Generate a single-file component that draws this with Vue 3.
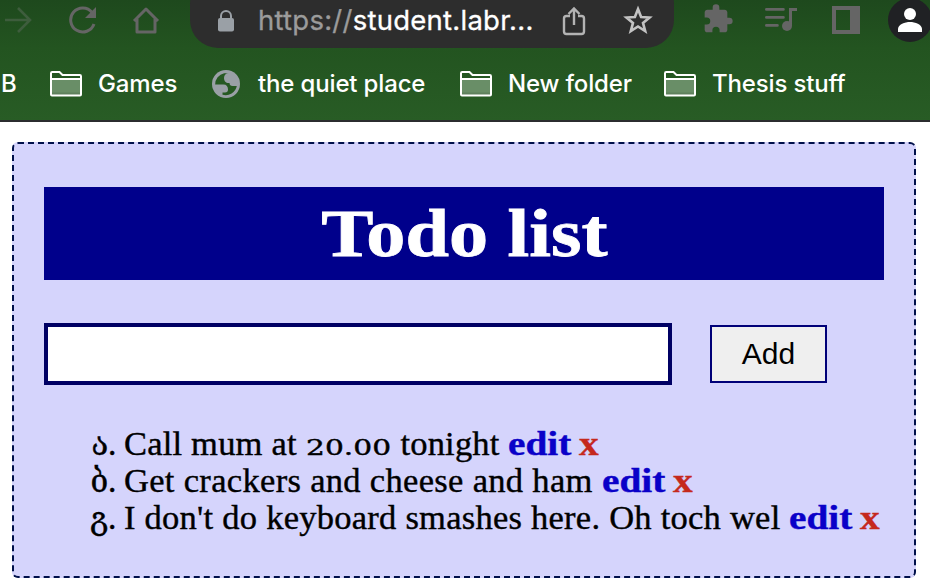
<script setup>
import { ref } from 'vue'

const draft = ref('')
const bookmarks = [
  { label: 'Games', icon: 'folder', kind: 'games' },
  { label: 'the quiet place', icon: 'globe', kind: 'quiet' },
  { label: 'New folder', icon: 'folder', kind: 'new' },
  { label: 'Thesis stuff', icon: 'folder', kind: 'thesis' },
]
const todos = [
  { marker: 'ა', parts: [{ text: 'Call mum at ' }, { text: '20.00', num: true }, { text: ' tonight' }], cls: 'call' },
  { marker: 'ბ', parts: [{ text: 'Get crackers and cheese and ham' }], cls: 'get' },
  { marker: 'გ', parts: [{ text: "I don't do keyboard smashes here. Oh toch wel" }], cls: 'keys' },
]
</script>

<template>
  <div class="page">
    <header class="browser">
      <div class="toolbar">
        <svg class="forward" width="28" height="28" viewBox="0 0 28 28" fill="none" stroke="#3e5d3d" stroke-width="2.6"><path d="M1 14h25M14 2l12 12-12 12" /></svg>
        <svg class="reload" width="28" height="28" viewBox="0 0 28 28"><path d="M23.1 6.5A12 12 0 1 0 25 18" fill="none" stroke="#656565" stroke-width="3" /><path d="M27 1v11H16z" fill="#656565" /></svg>
        <svg class="home" width="28" height="28" viewBox="0 0 28 28" fill="none" stroke="#656565" stroke-width="3" stroke-linejoin="round"><path d="M2 15 14 3l12 12M5 13v13h18V13" /></svg>
        <div class="address">
          <svg class="lock" width="18" height="22" viewBox="0 0 18 22"><path d="M4 9V6a5 5 0 0 1 10 0v3" fill="none" stroke="#9aa0a6" stroke-width="2" /><rect x="1" y="8" width="16" height="13.5" rx="2" fill="#9aa0a6" /></svg>
          <span class="url"><span class="scheme">https://</span>student.labr...</span>
          <svg class="share" width="24" height="30" viewBox="0 0 24 30" fill="none" stroke="#b3b3b3" stroke-width="2.4"><path d="M8 10H4.5A2.5 2.5 0 0 0 2 12.5V25.5A2.5 2.5 0 0 0 4.500 28H19.500A2.500 2.500 0 0 0 22 25.500V12.500A2.500 2.500 0 0 0 19.500 10H16M12 19V2.500M6.500 8 12 2.500 17.500 8" /></svg>
          <svg class="star" width="30" height="30" viewBox="0 0 30 30" fill="none" stroke="#c2c2c2" stroke-width="2.6"><path d="m15 4 3.100 8 8.400.5-6.500 5.400 2.200 8.200-7.200-4.600-7.200 4.600 2.200-8.200-6.500-5.400 8.400-.5z" /></svg>
        </div>
        <svg class="puzzle" width="32" height="32" viewBox="0 0 24 24" fill="#656565"><path d="M20.500 11H19V7c0-1.100-.9-2-2-2h-4V3.500a2.500 2.500 0 0 0-5 0V5H4c-1.100 0-2 .9-2 2v3.800h1.500a2.700 2.700 0 0 1 0 5.400H2V20c0 1.100.9 2 2 2h3.800v-1.500a2.700 2.700 0 0 1 5.400 0V22H17c1.100 0 2-.9 2-2v-4h1.500a2.500 2.500 0 0 0 0-5z" /></svg>
        <svg class="queue" width="32" height="26" viewBox="0 0 32 26" fill="none" stroke="#656565" stroke-width="2.8"><path d="M1.400 3.400h17M1.400 11.400h17M1.400 19.400h11" stroke-linecap="round" /><path d="M32 3.400h-6.500V20" stroke-width="3" /><circle cx="22" cy="20" r="5" fill="#656565" stroke="none" /></svg>
        <svg class="panel" width="28" height="28" viewBox="0 0 28 28"><path fill="#656565" fill-rule="evenodd" d="M0 0h28v28H0zM4 4v20h14V4z" /></svg>
        <svg class="profile" width="44" height="44" viewBox="0 0 44 44"><circle cx="22" cy="22" r="22" fill="#202124" /><circle cx="22" cy="16" r="6" fill="#fff" /><path fill="#fff" d="M10 34v-3c0-4.500 7-7 12-7s12 2.500 12 7v3z" /></svg>
      </div>
      <nav class="bookmarks">
        <span class="cut">B</span>
        <a v-for="b in bookmarks" :key="b.label" class="bookmark" :class="b.kind">
          <svg v-if="b.icon === 'folder'" width="32" height="26" viewBox="0 0 32 26"><path fill="#698e67" d="M2 9h28v15H2z" /><path fill="#5f805d" d="M2 21.500h28V24H2z" /><path d="M1 23.500V2.200Q1 1 2.200 1H9.500L12.500 4H29.800Q31 4 31 5.200V23.500Q31 24.500 30 24.500H2Q1 24.500 1 23.500zM1 8h30" fill="none" stroke="#fff" stroke-width="2" /></svg>
          <svg v-else width="28" height="28" viewBox="0 0 28 28"><circle cx="14" cy="14" r="14" fill="#9aa0a6" /><path fill="#265922" d="M16.500 3.300c-2.500 0-4.500 2-4.500 4.700 0 3 2 5 4.500 5h1c0 2 1.200 3 3 3h4.300a11.400 11.400 0 0 1-14.300 8.800V22.500h2.500c2 0 3-1.200 3-3 0-3-1.500-5-4.500-5H3.200a11.200 11.200 0 0 1 9-11.300z" /></svg>
          <span class="label">{{ b.label }}</span>
        </a>
      </nav>
    </header>

    <main class="card">
      <h1><span>Todo list</span></h1>
      <form class="entry" @submit.prevent>
        <input v-model="draft" type="text" />
        <button type="submit">Add</button>
      </form>
      <ol>
        <li v-for="t in todos" :key="t.marker" :class="t.cls">
          <span class="marker">{{ t.marker }}.</span>
          <span class="text"><span v-for="(p, i) in t.parts" :key="i" :class="{ num: p.num }">{{ p.text }}</span></span>
          <a class="edit"><b>edit</b></a>
          <a class="remove"><b>x</b></a>
        </li>
      </ol>
    </main>
  </div>
</template>

<style>
body { margin: 0; background: #fff; overflow: hidden; }
</style>

<style scoped>
* { box-sizing: border-box; }
.page { width: 930px; height: 584px; overflow: hidden; background: #fff; }
svg { display: block; flex: none; }
.browser { height: 122px; overflow: hidden; border-bottom: 2px solid #2b2c2f; background: linear-gradient(#1e491d, #235420 48px, #285c25); font-family: Inter, sans-serif; color: #fff; }
.toolbar { height: 48px; display: flex; align-items: flex-start; }
.forward { margin: 6px 0 0 4px; }
.reload { margin: 6px 0 0 37px; }
.home { margin: 6px 0 0 35px; }
.address { flex: none; width: 484px; height: 72px; margin: -24px 0 0 30px; padding: 24px 0 0 27px; border-radius: 28px; background: #2d2d2d; display: flex; align-items: flex-start; }
.lock { margin-top: 10px; }
.url { flex: none; width: 305px; margin-left: 23px; font-size: 27.5px; line-height: 41px; white-space: nowrap; letter-spacing: .25px; -webkit-text-stroke: .3px; }
.scheme { color: #9b9b9b; }
.share { margin: 6px 0 0 -1px; }
.star { margin: 5px 0 0 37px; }
.puzzle { margin: 3px 0 0 28px; }
.queue { margin: 6px 0 0 31px; }
.panel { margin: 6px 0 0 35px; }
.profile { margin: -2px 0 0 28px; }
.bookmarks { height: 72px; display: flex; align-items: center; font-size: 24px; font-weight: 500; letter-spacing: -.15px; white-space: nowrap; }
.cut { width: 50px; padding: 0 0 2px 1px; }
.bookmark { display: flex; align-items: center; gap: 16px; }
.label { padding-bottom: 2px; }
.games { width: 162px; }
.quiet { width: 248px; gap: 18px; }
.new { width: 204px; }
.card { width: 904px; height: 436px; margin: 20px 0 0 12px; padding: 43px 30px 0; border: 2px dashed #00104a; border-radius: 6px; background: #d5d4fc; font-family: "Liberation Serif", serif; }
h1 { height: 93px; margin: 0; background: #00008b; color: #fff; text-align: center; font-size: 68px; line-height: 92px; }
h1 span { display: inline-block; transform: scaleX(1.15); -webkit-text-stroke: .8px; }
.entry { display: flex; align-items: center; gap: 38px; margin-top: 43px; }
input { width: 628px; height: 62px; margin: 0; border: 4px solid #000064; border-radius: 0; background: #fff; font-size: 30px; outline: 0; }
button { width: 117px; height: 58px; padding: 0; border: 2px solid #000078; border-radius: 0; background: #efefef; color: #000; font: 30px "Liberation Sans", sans-serif; }
ol { list-style: none; margin: 40px 0 0; padding: 0; font-size: 34.5px; color: #000; -webkit-text-stroke: .4px; }
li { height: 37px; display: flex; align-items: baseline; line-height: 37px; white-space: nowrap; }
.marker { width: 80px; padding-right: 8px; text-align: right; font: 31px/37px "DejaVu Serif", serif; letter-spacing: -1px; flex: none; }
.text { flex: none; white-space: pre; }
.call .text { width: 384px; letter-spacing: .2px; }
.get .text { width: 478px; letter-spacing: .32px; }
.keys .text { width: 665px; letter-spacing: .25px; }
.num { display: inline-block; width: 86px; font: 22.5px/30px "DejaVu Serif", serif; letter-spacing: 0; transform: scaleX(1.32); transform-origin: left; }
.edit { width: 71px; color: #0a00c8; }
.remove { color: #c5281c; }
b { display: inline-block; transform: scaleX(1.14); transform-origin: left; }
</style>
